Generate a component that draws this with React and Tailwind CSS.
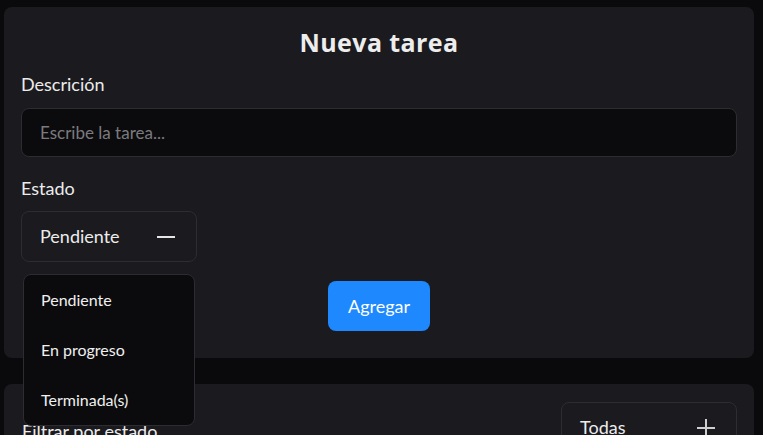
import React, { useState } from 'react';

const estados = ['Pendiente', 'En progreso', 'Terminada(s)'];

const MinusIcon = () => (
  <svg width="20" height="20" viewBox="0 0 20 20" fill="none">
    <path d="M1 10h18" stroke="#e5e5e5" strokeWidth="2" />
  </svg>
);

const PlusIcon = () => (
  <svg width="20" height="20" viewBox="0 0 20 20" fill="none">
    <path d="M1 10h18M10 1v18" stroke="#cfcfcf" strokeWidth="2" />
  </svg>
);

const App = () => {
  const [estado, setEstado] = useState('Pendiente');
  const [open, setOpen] = useState(true);
  const [descripcion, setDescripcion] = useState('');

  return (
    <div className="min-h-screen bg-[#0a0a0c] pl-[4px] pr-[9px] pt-[7px] text-[#ececec] font-['Lato','Open_Sans',sans-serif]">
      {/* Nueva tarea */}
      <div className="rounded-lg bg-[#1b1b1f] px-[17px] pt-[17px] pb-[27px]">
        <h2 className="text-center text-[25px] leading-[36px] font-bold tracking-[0.4px] text-[#ededed] font-['Open_Sans','Lato',sans-serif]">Nueva tarea</h2>

        <p className="mt-[10px] text-[18px] leading-[28px]">Descrición</p>
        <input
          type="text"
          value={descripcion}
          onChange={(e) => setDescripcion(e.target.value)}
          placeholder="Escribe la tarea..."
          className="mt-[10px] block h-[49px] w-full rounded-lg border border-[#2c2c31] bg-[#0b0b0d] px-[18px] text-[17px] text-[#ececec] placeholder:text-[#7b7b7f] outline-none"
        />

        <p className="mt-[17px] text-[18px] leading-[28px]">Estado</p>
        <div className="relative mt-[9px] w-[176px]">
          <button
            onClick={() => setOpen((prev) => !prev)}
            className="flex h-[51px] w-full items-center justify-between rounded-lg border border-[#2c2c31] bg-[#1b1b1f] pl-[18px] pr-[20px] text-[18px]"
          >
            <span>{estado}</span>
            <MinusIcon />
          </button>
          {open && (
            <div className="absolute left-[2px] top-[63px] z-10 w-[172px] rounded-lg border border-[#2c2c31] bg-[#0b0b0d]">
              {estados.map((e) => (
                <div
                  key={e}
                  onClick={() => {
                    setEstado(e);
                    setOpen(false);
                  }}
                  className="flex h-[50px] items-center px-[17px] text-[16px] text-[#f0f0f0]"
                >
                  {e}
                </div>
              ))}
            </div>
          )}
        </div>

        <div className="mt-[19px] flex justify-center">
          <button className="h-[50px] w-[102px] rounded-lg bg-[#1e88ff] text-[18px] text-white">Agregar</button>
        </div>
      </div>

      {/* Filtro */}
      <div className="mt-[26px] flex items-center justify-between rounded-lg bg-[#1b1b1f] pl-[18px] pr-[17px] pt-[18px] pb-[18px]">
        <p className="text-[18px] leading-[28px] pt-[6px]">Filtrar por estado</p>
        <button className="flex h-[51px] w-[176px] items-center justify-between rounded-lg border border-[#2c2c31] bg-[#1b1b1f] pl-[18px] pr-[20px] text-[18px]">
          <span>Todas</span>
          <PlusIcon />
        </button>
      </div>
    </div>
  );
};

export default App;
